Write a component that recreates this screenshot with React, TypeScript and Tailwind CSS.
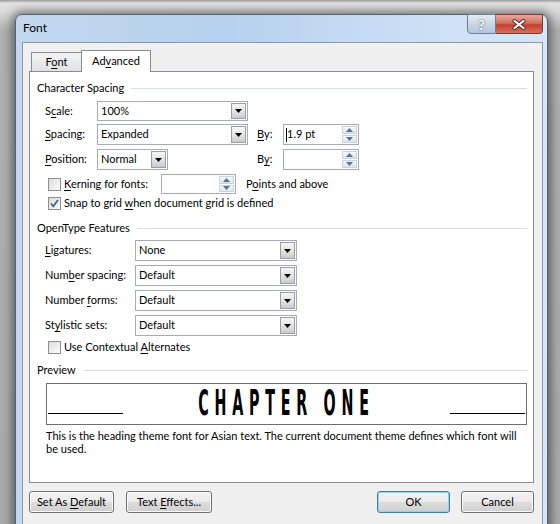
import type { ReactNode } from 'react';

function Key({ children }: { children: ReactNode }) {
  return <span className="underline decoration-1 underline-offset-[2px]">{children}</span>;
}

function Arrow() {
  return (
    <svg width="7" height="4" viewBox="0 0 7 4">
      <path d="M0 0H7L3.5 4Z" fill="#000" />
    </svg>
  );
}

function Combo({ value, className }: { value: string; className: string }) {
  return (
    <div className={`flex h-full items-stretch border border-[#a5acb5] bg-white ${className}`}>
      <span className="flex flex-1 items-center pl-[3px]">{value}</span>
      <div className="m-px flex w-[15px] items-center justify-center border border-[#9a9fa6] bg-[linear-gradient(to_bottom,#f6f6f6,#e4e4e4_50%,#cbcbcb)]">
        <Arrow />
      </div>
    </div>
  );
}

function SpinBtn({ up = false }: { up?: boolean }) {
  return (
    <div className="flex flex-1 items-center justify-center border border-[#ccd3dc] bg-[linear-gradient(to_bottom,#f7f9fb,#dde3ea)]">
      <svg width="7" height="4" viewBox="0 0 7 4">
        <path d={up ? 'M0 4H7L3.5 0Z' : 'M0 0H7L3.5 4Z'} fill="#5570a8" />
      </svg>
    </div>
  );
}

function Spin({ value = '', cursor = false, className }: { value?: string; cursor?: boolean; className: string }) {
  return (
    <div className={`flex h-full border border-[#a5acb5] bg-white ${className}`}>
      <span className="flex flex-1 items-center pl-[2px]">
        {cursor && <span className="h-[14px] w-px bg-black" />}
        {value}
      </span>
      <div className="flex w-[17px] flex-col gap-px p-px">
        <SpinBtn up />
        <SpinBtn />
      </div>
    </div>
  );
}

function Check({ checked = false }: { checked?: boolean }) {
  return (
    <div className="flex h-[13px] w-[13px] shrink-0 items-center justify-center border border-[#8e8f8f] bg-[linear-gradient(135deg,#dcdcdc,#fbfbfb)]">
      {checked && (
        <svg width="11" height="11" viewBox="0 0 11 11">
          <path d="M2 5.5L4.3 8.3L9 2" fill="none" stroke="#4a5f8c" strokeWidth="1.8" />
        </svg>
      )}
    </div>
  );
}

function Btn({ children, className, def = false }: { children: ReactNode; className: string; def?: boolean }) {
  return (
    <div
      className={`flex h-[22px] items-center justify-center rounded-[3px] border bg-[linear-gradient(to_bottom,#f2f2f2,#ebebeb_48%,#dddddd_52%,#cfcfcf)] ${
        def ? 'border-[#3c7fb1] shadow-[inset_0_0_0_1px_#8fd3f3]' : 'border-[#707070] shadow-[inset_0_0_0_1px_#fbfbfb]'
      } ${className}`}
    >
      <span>{children}</span>
    </div>
  );
}

function Heading({ children }: { children: ReactNode }) {
  return (
    <div className="flex h-[16px] items-center pl-[7px] pr-[6px]">
      <span>{children}</span>
      <div className="ml-[7px] h-px flex-1 bg-[#d5dde5]" />
    </div>
  );
}

function FeatureRow({ label, value }: { label: ReactNode; value: string }) {
  return (
    <div className="mt-[4px] flex h-[21px] items-center pl-[15px]">
      <span className="w-[90px]">{label}</span>
      <Combo value={value} className="w-[162px]" />
    </div>
  );
}

export default function App() {
  return (
    <div className="h-[524px] w-[560px] overflow-hidden bg-[linear-gradient(to_bottom,#9a9a9a_0px,#e2e2e2_3px,#d9d9d9_12px,#b0b0b0_30px,#a9a9a9_100%)] pl-[15px] pt-[14px] font-['Lato','Liberation_Sans',sans-serif] text-[11px] text-black">
      <div className="h-[530px] w-[533px] rounded-t-[7px] border border-[#55616d] bg-[linear-gradient(to_right,#c2d8ee,#b6d1ee_40%,#c8ddf4_70%,#d5e6f7)] shadow-[0_0_10px_3px_rgba(0,0,0,0.45)]">
        <div className="flex h-[27px] items-start justify-between">
          <span className="ml-[7px] flex h-[25px] items-center text-[12px]">Font</span>
          <div className="-mt-px mr-[4px] flex h-[20px]">
            <div className="flex w-[29px] items-center justify-center rounded-bl-[4px] border border-[#6f7f90] bg-[linear-gradient(to_bottom,#e3ebf4,#c9d7e6_50%,#b3c6da)] font-bold text-[14px] text-white [text-shadow:0_0_2px_#33404d]">
              ?
            </div>
            <div className="flex w-[47px] items-center justify-center rounded-br-[4px] border border-l-0 border-[#7a3a32] bg-[linear-gradient(to_bottom,#e9a99d,#d0705f_45%,#c2412e_55%,#d8705c)]">
              <svg width="14" height="11" viewBox="0 0 14 11">
                <path d="M2.5 2L11.5 9M11.5 2L2.5 9" stroke="#4b2a26" strokeWidth="4" strokeLinecap="round" />
                <path d="M2.5 2L11.5 9M11.5 2L2.5 9" stroke="#fff" strokeWidth="2.2" strokeLinecap="round" />
              </svg>
            </div>
          </div>
        </div>

        <div className="ml-[6px] h-[510px] w-[521px] border border-[#8a99a8] bg-[#f0f0f0]">
          <div className="ml-[8px] mt-[7px] flex h-[21px] items-end">
            <div className="flex h-[19px] w-[50px] items-center justify-center border border-b-0 border-r-0 border-[#898c95] bg-[linear-gradient(to_bottom,#f4f4f4,#e1e1e1)]">
              <span>
                F<Key>o</Key>nt
              </span>
            </div>
            <div className="relative z-10 -mb-px flex h-[22px] w-[70px] items-center justify-center border border-b-0 border-[#898c95] bg-white pb-px">
              <span>
                Ad<Key>v</Key>anced
              </span>
            </div>
          </div>

          <div className="ml-[6px] h-[412px] w-[505px] border border-[#898c95] bg-white">
            <div className="mt-[8px]">
              <Heading>Character Spacing</Heading>
            </div>

            <div className="mt-[5px] flex h-[20px] items-center pl-[15px]">
              <span className="w-[52px]">
                S<Key>c</Key>ale:
              </span>
              <Combo value="100%" className="w-[151px]" />
            </div>

            <div className="mt-[3px] flex h-[21px] items-center pl-[15px]">
              <span className="w-[52px]">
                <Key>S</Key>pacing:
              </span>
              <Combo value="Expanded" className="w-[151px]" />
              <span className="ml-[9px] w-[26px]">
                <Key>B</Key>y:
              </span>
              <Spin value="1.9 pt" cursor className="w-[76px]" />
            </div>

            <div className="mt-[4px] flex h-[21px] items-center pl-[15px]">
              <span className="w-[52px]">
                <Key>P</Key>osition:
              </span>
              <div className="h-full w-[151px]">
                <Combo value="Normal" className="w-[71px]" />
              </div>
              <span className="ml-[9px] w-[26px]">
                B<Key>y</Key>:
              </span>
              <Spin className="w-[76px]" />
            </div>

            <div className="mt-[4px] flex h-[20px] items-center pl-[18px]">
              <Check />
              <span className="ml-[3px] w-[97px]">
                <Key>K</Key>erning for fonts:
              </span>
              <Spin className="w-[75px]" />
              <span className="ml-[10px]">
                P<Key>o</Key>ints and above
              </span>
            </div>

            <div className="mt-[2px] flex h-[15px] items-center pl-[18px]">
              <Check checked />
              <span className="ml-[3px]">
                Snap to grid <Key>w</Key>hen document grid is defined
              </span>
            </div>

            <div className="mt-[9px]">
              <Heading>OpenType Features</Heading>
            </div>

            <div className="mt-[2px]">
              <FeatureRow
                label={
                  <>
                    <Key>L</Key>igatures:
                  </>
                }
                value="None"
              />
              <FeatureRow
                label={
                  <>
                    Num<Key>b</Key>er spacing:
                  </>
                }
                value="Default"
              />
              <FeatureRow
                label={
                  <>
                    Number <Key>f</Key>orms:
                  </>
                }
                value="Default"
              />
              <FeatureRow
                label={
                  <>
                    St<Key>y</Key>listic sets:
                  </>
                }
                value="Default"
              />
            </div>

            <div className="mt-[4px] flex h-[15px] items-center pl-[18px]">
              <Check />
              <span className="ml-[3px]">
                Use Contextual <Key>A</Key>lternates
              </span>
            </div>

            <div className="mt-[7px]">
              <Heading>Preview</Heading>
            </div>

            <div className="ml-[16px] mr-[6px] mt-[5px] flex h-[42px] items-end justify-between border border-[#6f6f6f] px-px">
              <div className="mb-[10px] h-px w-[75px] bg-black" />
              <div className="flex h-full items-center">
                <span className="inline-block scale-x-[0.72] scale-y-[1.62] font-['DejaVu_Sans_Condensed','DejaVu_Sans',sans-serif] text-[22px] font-bold leading-none tracking-[8px]">
                  CHAPTER ONE
                </span>
              </div>
              <div className="mb-[10px] h-px w-[75px] bg-black" />
            </div>

            <p className="ml-[16px] mt-[4px] whitespace-nowrap leading-[13px]">
              This is the heading theme font for Asian text. The current document theme defines which font will
              <br />
              be used.
            </p>
          </div>

          <div className="mt-[8px] flex h-[22px] items-center pl-[6px]">
            <Btn className="w-[85px]">
              Set As <Key>D</Key>efault
            </Btn>
            <Btn className="ml-[12px] w-[86px]">
              Text <Key>E</Key>ffects...
            </Btn>
            <Btn def className="ml-[165px] w-[73px]">
              OK
            </Btn>
            <Btn className="ml-[11px] w-[73px]">
              Cancel
            </Btn>
          </div>
        </div>
      </div>
    </div>
  );
}
